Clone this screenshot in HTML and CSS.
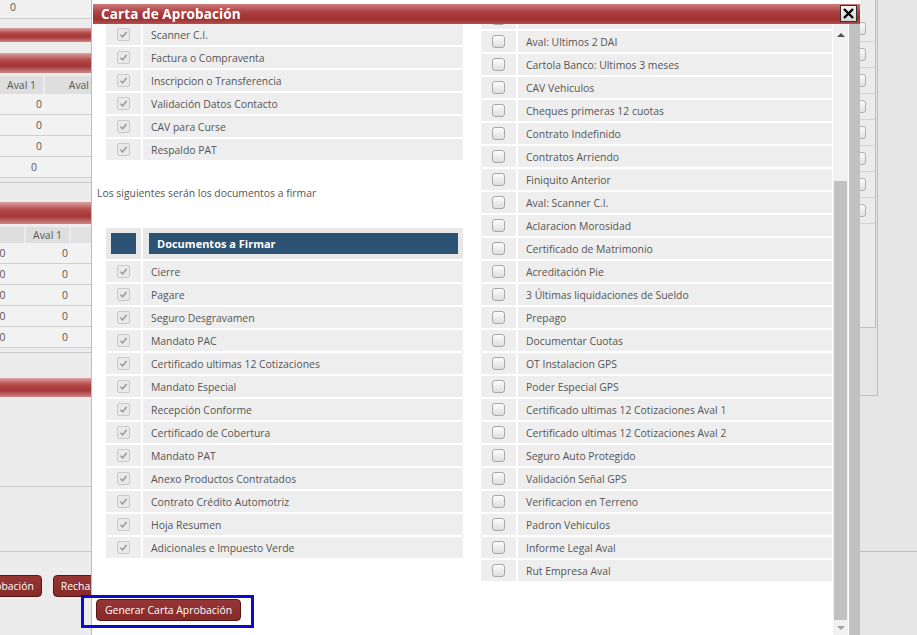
FILE: index.html
```html
<!DOCTYPE html>
<html lang="es">
<head>
<meta charset="utf-8">
<title>Carta de Aprobación</title>
<link rel="stylesheet" href="styles.css">
</head>
<body>
<div class="page">
  <aside class="bg-left">
    <div class="bl-top">0</div>
    <div class="bl-bar bar-a"></div>
    <div class="bl-bar bar-b"></div>
    <div class="bl-grid g1">
      <div class="bl-h"><span>Aval 1</span><span>Aval</span></div>
      <div class="bl-r"><span>0</span><span></span></div>
      <div class="bl-r"><span>0</span><span></span></div>
      <div class="bl-r"><span>0</span><span></span></div>
      <div class="bl-r last"><span>0</span><span></span></div>
    </div>
    <div class="bl-sep s1"></div>
    <div class="bl-bar bar-c"></div>
    <div class="bl-grid g2">
      <div class="bl-h"><span></span><span>Aval 1</span></div>
      <div class="bl-r"><span>0</span><span>0</span></div>
      <div class="bl-r"><span>0</span><span>0</span></div>
      <div class="bl-r"><span>0</span><span>0</span></div>
      <div class="bl-r"><span>0</span><span>0</span></div>
      <div class="bl-r"><span>0</span><span>0</span></div>
    </div>
    <div class="bl-sep s2"></div>
    <div class="bl-bar bar-d"></div>
    <div class="bl-sep s3"></div>
    <div class="bl-sep s4"></div>
    <div class="bl-btns">
      <button class="btn bl-b1">Aprobación</button>
      <button class="btn bl-b2">Rechazar</button>
    </div>
  </aside>
  <div class="bg-mid"></div>
  <aside class="bg-right">
    <div class="br-outer">
      <div class="br-inner">
        <div class="br-head"></div>
        <div class="br-r"><span class="br-cb"></span></div>
        <div class="br-r"><span class="br-cb"></span></div>
        <div class="br-r"><span class="br-cb"></span></div>
        <div class="br-r"><span class="br-cb"></span></div>
        <div class="br-r"><span class="br-cb"></span></div>
        <div class="br-r"><span class="br-cb"></span></div>
        <div class="br-r"><span class="br-cb"></span></div>
        <div class="br-r"><span class="br-cb"></span></div>
      </div>
    </div>
    <div class="br-line"></div>
  </aside>
</div>

<div class="dialog">
  <div class="dlg-title">
    <span class="dlg-title-text">Carta de Aprobación</span>
    <button class="dlg-close" aria-label="Cerrar"><svg width="13" height="13" viewBox="0 0 13 13"><path d="M2 2 L11 11 M11 2 L2 11" stroke="#000" stroke-width="2.4" fill="none"/></svg></button>
  </div>
  <div class="dlg-main">
    <div class="dlg-scroll">
      <div class="dlg-content">
        <div class="col-left">
          <div class="list">
            <div class="row"><div class="cbc"><span class="cb on"><svg viewBox="0 0 11 11"><path d="M2.5 5.8 L4.6 7.9 L8.6 3" stroke="#9a9a9a" stroke-width="1.6" fill="none"/></svg></span></div><div class="txc">Scanner C.I.</div></div>
            <div class="row"><div class="cbc"><span class="cb on"><svg viewBox="0 0 11 11"><path d="M2.5 5.8 L4.6 7.9 L8.6 3" stroke="#9a9a9a" stroke-width="1.6" fill="none"/></svg></span></div><div class="txc">Factura o Compraventa</div></div>
            <div class="row"><div class="cbc"><span class="cb on"><svg viewBox="0 0 11 11"><path d="M2.5 5.8 L4.6 7.9 L8.6 3" stroke="#9a9a9a" stroke-width="1.6" fill="none"/></svg></span></div><div class="txc">Inscripcion o Transferencia</div></div>
            <div class="row"><div class="cbc"><span class="cb on"><svg viewBox="0 0 11 11"><path d="M2.5 5.8 L4.6 7.9 L8.6 3" stroke="#9a9a9a" stroke-width="1.6" fill="none"/></svg></span></div><div class="txc">Validación Datos Contacto</div></div>
            <div class="row"><div class="cbc"><span class="cb on"><svg viewBox="0 0 11 11"><path d="M2.5 5.8 L4.6 7.9 L8.6 3" stroke="#9a9a9a" stroke-width="1.6" fill="none"/></svg></span></div><div class="txc">CAV para Curse</div></div>
            <div class="row"><div class="cbc"><span class="cb on"><svg viewBox="0 0 11 11"><path d="M2.5 5.8 L4.6 7.9 L8.6 3" stroke="#9a9a9a" stroke-width="1.6" fill="none"/></svg></span></div><div class="txc">Respaldo PAT</div></div>
          </div>
          <p class="note">Los siguientes serán los documentos a firmar</p>
          <div class="list">
            <div class="row head"><div class="hc"><div class="hb"></div></div><div class="hc hc2"><div class="hb">Documentos a Firmar</div></div></div>
            <div class="row"><div class="cbc"><span class="cb on"><svg viewBox="0 0 11 11"><path d="M2.5 5.8 L4.6 7.9 L8.6 3" stroke="#9a9a9a" stroke-width="1.6" fill="none"/></svg></span></div><div class="txc">Cierre</div></div>
            <div class="row"><div class="cbc"><span class="cb on"><svg viewBox="0 0 11 11"><path d="M2.5 5.8 L4.6 7.9 L8.6 3" stroke="#9a9a9a" stroke-width="1.6" fill="none"/></svg></span></div><div class="txc">Pagare</div></div>
            <div class="row"><div class="cbc"><span class="cb on"><svg viewBox="0 0 11 11"><path d="M2.5 5.8 L4.6 7.9 L8.6 3" stroke="#9a9a9a" stroke-width="1.6" fill="none"/></svg></span></div><div class="txc">Seguro Desgravamen</div></div>
            <div class="row"><div class="cbc"><span class="cb on"><svg viewBox="0 0 11 11"><path d="M2.5 5.8 L4.6 7.9 L8.6 3" stroke="#9a9a9a" stroke-width="1.6" fill="none"/></svg></span></div><div class="txc">Mandato PAC</div></div>
            <div class="row"><div class="cbc"><span class="cb on"><svg viewBox="0 0 11 11"><path d="M2.5 5.8 L4.6 7.9 L8.6 3" stroke="#9a9a9a" stroke-width="1.6" fill="none"/></svg></span></div><div class="txc">Certificado ultimas 12 Cotizaciones</div></div>
            <div class="row"><div class="cbc"><span class="cb on"><svg viewBox="0 0 11 11"><path d="M2.5 5.8 L4.6 7.9 L8.6 3" stroke="#9a9a9a" stroke-width="1.6" fill="none"/></svg></span></div><div class="txc">Mandato Especial</div></div>
            <div class="row"><div class="cbc"><span class="cb on"><svg viewBox="0 0 11 11"><path d="M2.5 5.8 L4.6 7.9 L8.6 3" stroke="#9a9a9a" stroke-width="1.6" fill="none"/></svg></span></div><div class="txc">Recepción Conforme</div></div>
            <div class="row"><div class="cbc"><span class="cb on"><svg viewBox="0 0 11 11"><path d="M2.5 5.8 L4.6 7.9 L8.6 3" stroke="#9a9a9a" stroke-width="1.6" fill="none"/></svg></span></div><div class="txc">Certificado de Cobertura</div></div>
            <div class="row"><div class="cbc"><span class="cb on"><svg viewBox="0 0 11 11"><path d="M2.5 5.8 L4.6 7.9 L8.6 3" stroke="#9a9a9a" stroke-width="1.6" fill="none"/></svg></span></div><div class="txc">Mandato PAT</div></div>
            <div class="row"><div class="cbc"><span class="cb on"><svg viewBox="0 0 11 11"><path d="M2.5 5.8 L4.6 7.9 L8.6 3" stroke="#9a9a9a" stroke-width="1.6" fill="none"/></svg></span></div><div class="txc">Anexo Productos Contratados</div></div>
            <div class="row"><div class="cbc"><span class="cb on"><svg viewBox="0 0 11 11"><path d="M2.5 5.8 L4.6 7.9 L8.6 3" stroke="#9a9a9a" stroke-width="1.6" fill="none"/></svg></span></div><div class="txc">Contrato Crédito Automotriz</div></div>
            <div class="row"><div class="cbc"><span class="cb on"><svg viewBox="0 0 11 11"><path d="M2.5 5.8 L4.6 7.9 L8.6 3" stroke="#9a9a9a" stroke-width="1.6" fill="none"/></svg></span></div><div class="txc">Hoja Resumen</div></div>
            <div class="row"><div class="cbc"><span class="cb on"><svg viewBox="0 0 11 11"><path d="M2.5 5.8 L4.6 7.9 L8.6 3" stroke="#9a9a9a" stroke-width="1.6" fill="none"/></svg></span></div><div class="txc">Adicionales e Impuesto Verde</div></div>
          </div>
          <button class="btn gen">Generar Carta Aprobación</button>
        </div>
        <div class="col-right">
          <div class="list">
            <div class="row"><div class="cbc"><span class="cb off"></span></div><div class="txc"></div></div>
            <div class="row"><div class="cbc"><span class="cb off"></span></div><div class="txc">Aval: Ultimos 2 DAI</div></div>
            <div class="row"><div class="cbc"><span class="cb off"></span></div><div class="txc">Cartola Banco: Ultimos 3 meses</div></div>
            <div class="row"><div class="cbc"><span class="cb off"></span></div><div class="txc">CAV Vehiculos</div></div>
            <div class="row"><div class="cbc"><span class="cb off"></span></div><div class="txc">Cheques primeras 12 cuotas</div></div>
            <div class="row"><div class="cbc"><span class="cb off"></span></div><div class="txc">Contrato Indefinido</div></div>
            <div class="row"><div class="cbc"><span class="cb off"></span></div><div class="txc">Contratos Arriendo</div></div>
            <div class="row"><div class="cbc"><span class="cb off"></span></div><div class="txc">Finiquito Anterior</div></div>
            <div class="row"><div class="cbc"><span class="cb off"></span></div><div class="txc">Aval: Scanner C.I.</div></div>
            <div class="row"><div class="cbc"><span class="cb off"></span></div><div class="txc">Aclaracion Morosidad</div></div>
            <div class="row"><div class="cbc"><span class="cb off"></span></div><div class="txc">Certificado de Matrimonio</div></div>
            <div class="row"><div class="cbc"><span class="cb off"></span></div><div class="txc">Acreditación Pie</div></div>
            <div class="row"><div class="cbc"><span class="cb off"></span></div><div class="txc">3 Últimas liquidaciones de Sueldo</div></div>
            <div class="row"><div class="cbc"><span class="cb off"></span></div><div class="txc">Prepago</div></div>
            <div class="row"><div class="cbc"><span class="cb off"></span></div><div class="txc">Documentar Cuotas</div></div>
            <div class="row"><div class="cbc"><span class="cb off"></span></div><div class="txc">OT Instalacion GPS</div></div>
            <div class="row"><div class="cbc"><span class="cb off"></span></div><div class="txc">Poder Especial GPS</div></div>
            <div class="row"><div class="cbc"><span class="cb off"></span></div><div class="txc">Certificado ultimas 12 Cotizaciones Aval 1</div></div>
            <div class="row"><div class="cbc"><span class="cb off"></span></div><div class="txc">Certificado ultimas 12 Cotizaciones Aval 2</div></div>
            <div class="row"><div class="cbc"><span class="cb off"></span></div><div class="txc">Seguro Auto Protegido</div></div>
            <div class="row"><div class="cbc"><span class="cb off"></span></div><div class="txc">Validación Señal GPS</div></div>
            <div class="row"><div class="cbc"><span class="cb off"></span></div><div class="txc">Verificacion en Terreno</div></div>
            <div class="row"><div class="cbc"><span class="cb off"></span></div><div class="txc">Padron Vehiculos</div></div>
            <div class="row"><div class="cbc"><span class="cb off"></span></div><div class="txc">Informe Legal Aval</div></div>
            <div class="row"><div class="cbc"><span class="cb off"></span></div><div class="txc">Rut Empresa Aval</div></div>
          </div>
        </div>
      </div>
      <div class="vscroll">
        <div class="vs-up"><span class="tri-up"></span></div>
        <div class="vs-track"></div>
        <div class="vs-thumb"></div>
        <div class="vs-down"><span class="tri-down"></span></div>
      </div>
    </div>
    <div class="outer-scroll"></div>
  </div>
</div>
<div class="focus-ring"></div>
</body>
</html>
```

FILE: styles.css
```css
* { box-sizing: border-box; }
html, body { margin: 0; padding: 0; }
body {
  width: 917px;
  height: 635px;
  overflow: hidden;
  position: relative;
  background: #e6e6e6;
  font-family: "Open Sans", "Noto Sans", sans-serif;
  font-size: 10.4px;
  color: #555;
}
button { font-family: inherit; }

.page { display: flex; height: 635px; }

/* ---------- background left strip ---------- */
.bg-left {
  width: 91px;
  flex: none;
  background: #ececec;
  display: flex;
  flex-direction: column;
  overflow: hidden;
}
.bl-top {
  height: 19px;
  line-height: 15px;
  padding-left: 10px;
  background: #f0f0f0;
  border-bottom: 1px solid #c9c9c9;
}
.bl-bar {
  height: 20px;
  background: linear-gradient(#dba3a3 0%, #b54a4a 35%, #a33636 65%, #cc8686 100%);
}
.bar-a { margin-top: 9px; height: 14px; }
.bar-b { margin-top: 11px; height: 20px; }
.bar-c { margin-top: 0; height: 22px; }
.bar-d { margin-top: 25px; height: 19px; }

.bl-grid { display: flex; flex-direction: column; }
.g1 { margin-top: 3px; }
.g2 { margin-top: 3px; margin-left: -21px; }
.bl-h, .bl-r { display: grid; white-space: nowrap; }
.g1 .bl-h, .g1 .bl-r { grid-template-columns: 45px 46px; }
.g2 .bl-h, .g2 .bl-r { grid-template-columns: 47px 45px; }
.bl-h { height: 18px; line-height: 18px; background: #e2e2e2; }
.g2 .bl-h { height: 16px; line-height: 16px; }
.bl-h span { text-align: center; color: #555; background: #dedede; border-right: 2px solid #ececec; }
.g1 .bl-h span:last-child { text-align: right; padding-right: 2px; border-right: 0; }
.bl-r { height: 21px; line-height: 20px; border-bottom: 1px solid #cfcfcf; background: #f2f2f2; }
.g1 .bl-r span:first-child { text-align: right; padding-right: 3px; }
.g1 .bl-r.last span:first-child { padding-right: 8px; }
.g2 .bl-r span:first-child { text-align: center; }
.g2 .bl-r span:last-child { text-align: right; padding-right: 3px; }
.bl-sep { border-bottom: 1px solid #c9c9c9; }
.s1 { height: 5px; margin-bottom: 19px; }
.s2 { height: 5px; }
.s3 { height: 90px; }
.s4 { height: 65px; }
.bl-btns { display: flex; gap: 11px; margin-top: 23px; margin-left: -30px; }
.bl-btns .btn { padding: 0 7px; }

/* ---------- buttons ---------- */
.btn {
  height: 22px;
  padding: 0 9px;
  background: linear-gradient(#973535, #862a2a);
  color: #fff;
  border: 1px solid #5a1616;
  border-radius: 4px;
  font-size: 10.4px;
  white-space: nowrap;
}

.bg-mid { flex: 1; }

/* ---------- background right strip ---------- */
.bg-right { width: 57px; flex: none; display: flex; flex-direction: column; }
.br-outer {
  width: 18px;
  height: 396px;
  border-right: 1px solid #bdbdbd;
  border-bottom: 1px solid #bdbdbd;
}
.br-inner {
  width: 16px;
  height: 328px;
  background: #ebebeb;
  border-right: 1px solid #bdbdbd;
  border-bottom: 1px solid #bdbdbd;
  overflow: hidden;
}
.br-head { height: 16px; }
.br-r { height: 26px; border-bottom: 1px solid #d2d2d2; display: flex; align-items: center; }
.br-cb {
  width: 13px; height: 13px;
  margin-left: -7px;
  border: 1px solid #b0b0b0;
  border-radius: 3px;
  background: linear-gradient(#fafafa, #e2e2e2);
}
.br-line { margin-top: 155px; border-bottom: 1px solid #bdbdbd; }

/* ---------- dialog ---------- */
.dialog {
  position: absolute;
  left: 91px;
  top: 0;
  width: 769px;
  height: 635px;
  background: #fff;
  border-left: 1px solid #bcbcbc;
  display: flex;
  flex-direction: column;
}
.dlg-title {
  position: relative;
  height: 20px;
  margin: 4px 0 0 1px;
  background: linear-gradient(#cd7d7d 0%, #ad4040 40%, #9e3030 75%, #b24f4f 100%);
  display: flex;
  align-items: center;
  padding-left: 8px;
}
.dlg-title-text {
  color: #fff;
  font-weight: 700;
  font-size: 13.5px;
  letter-spacing: 0.1px;
}
.dlg-close {
  position: absolute;
  right: 3px;
  top: 1px;
  width: 17px;
  height: 17px;
  padding: 0;
  border: 1px solid #333;
  background: linear-gradient(#f4f4f4, #d6d6d6);
  display: flex;
  align-items: center;
  justify-content: center;
}
.dlg-close svg { display: block; }

.dlg-main { flex: 1; display: flex; min-height: 0; }
.dlg-scroll { width: 756px; display: flex; overflow: hidden; }
.dlg-content {
  width: 741px;
  padding-left: 5px;
  display: grid;
  grid-template-columns: 376px 351px;
  column-gap: 8px;
  align-items: start;
  overflow: hidden;
}
.col-right { margin-top: -16px; }

.list { display: flex; flex-direction: column; gap: 2px; }
.col-left .list { margin-left: 9px; width: 357px; }
.row {
  display: grid;
  grid-template-columns: 35px 1fr;
  column-gap: 2px;
  height: 21px;
}
.cbc, .txc { background: #eeeeee; }
.cbc { display: flex; align-items: center; justify-content: center; }
.txc {
  display: flex;
  align-items: center;
  padding-left: 8px;
  white-space: nowrap;
  color: #555;
}
.cb { width: 13px; height: 13px; display: block; }
.cb.on {
  border: 1px solid #cacaca;
  border-radius: 2px;
  background: #e9e9e9;
}
.cb.on svg { display: block; width: 11px; height: 11px; }
.cb.off {
  border: 1px solid #a8a8a8;
  border-radius: 3px;
  background: linear-gradient(#fdfdfd, #dedede);
}
.row.head { height: 31px; }
.hc { background: #e8e8e8; padding: 5px; }
.hc2 { padding-left: 6px; }
.hb {
  height: 21px;
  background: #2c5274;
  color: #fff;
  font-weight: 700;
  font-size: 11px;
  display: flex;
  align-items: center;
  padding-left: 8px;
}

.note { margin: 25px 0 27px; line-height: 16px; color: #555; }
.gen { margin-top: 41px; margin-left: -1px; padding: 0 8px; }

/* dialog scrollbars */
.vscroll { width: 15px; flex: none; background: #f1f1f1; display: flex; flex-direction: column; }
.vs-up { height: 22px; display: flex; align-items: center; justify-content: center; }
.vs-track { height: 135px; }
.vs-thumb { flex: 1; margin: 0 1px; background: #c1c1c1; }
.vs-down { height: 15px; display: flex; align-items: center; justify-content: center; }
.tri-up { width: 0; height: 0; border-left: 4px solid transparent; border-right: 4px solid transparent; border-bottom: 4px solid #505050; }
.tri-down { width: 0; height: 0; border-left: 4px solid transparent; border-right: 4px solid transparent; border-top: 4px solid #a3a3a3; }
.outer-scroll { width: 11px; margin-left: 1px; background: #c1c1c1; }

.focus-ring {
  position: absolute;
  left: 81px;
  top: 595px;
  width: 173px;
  height: 33px;
  border: 3px solid #0a0ad0;
}
```
